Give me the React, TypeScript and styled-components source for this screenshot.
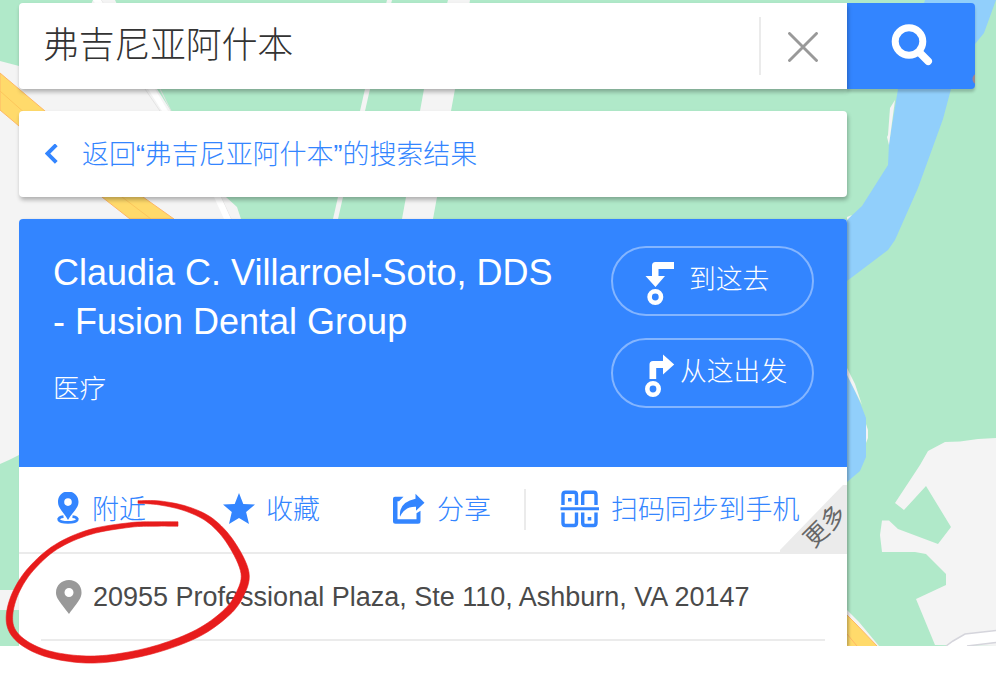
import React from 'react';
import styled, { createGlobalStyle } from 'styled-components';

const BLUE = '#3385ff';
const SANS = '"Liberation Sans", "Noto Sans CJK SC", sans-serif';

const GlobalStyle = createGlobalStyle`
  * { box-sizing: border-box; }
  body { margin: 0; background: #fff; font-family: ${SANS}; overflow: hidden; }
  button { font: inherit; padding: 0; margin: 0; background: none; border: 0; }
`;

const Page = styled.main`
  position: relative;
  width: 996px;
  height: 676px;
  overflow: hidden;
  background: #fff;
`;

const MapCanvas = styled.svg`
  position: absolute;
  inset: 0 auto auto 0;
  display: block;
`;

const Sidebar = styled.div`
  position: relative;
  width: 977px;
  height: 646px;
  margin-left: 19px;
  padding-top: 3px;
  display: flex;
  flex-direction: column;
  gap: 22px;
  clip-path: inset(0 0 0 -19px);
`;

const SearchRow = styled.form`
  display: flex;
  height: 86px;
  flex: none;
`;

const SearchField = styled.div`
  display: flex;
  align-items: center;
  width: 828px;
  padding-left: 24px;
  background: #fff;
  border-radius: 4px 0 0 4px;
  box-shadow: 1px 3px 4px rgba(0, 0, 0, 0.28);
  z-index: 1;
`;

const Query = styled.span`
  flex: 1;
  font-size: 36px;
  font-weight: 300;
  letter-spacing: -0.3px;
  line-height: 84px;
  color: #333;
`;

const ClearButton = styled.button`
  width: 88px;
  height: 58px;
  border-left: 2px solid #ebebeb;
  display: flex;
  align-items: center;
  justify-content: center;
  padding: 2px 3px 0 0;
`;

const SearchButton = styled.button`
  position: relative;
  width: 128px;
  background: radial-gradient(circle at 131px 76px, #a0848c 5px, transparent 6px) ${BLUE};
  border-radius: 0 4px 4px 0;
  box-shadow: 0 3px 3px rgba(0, 0, 0, 0.2);
  display: flex;
  padding: 19px 0 0 43px;
`;

const BackBar = styled.nav`
  display: flex;
  align-items: center;
  flex: none;
  width: 828px;
  height: 86px;
  padding-left: 26px;
  gap: 24px;
  background: #fff;
  border-radius: 4px;
  box-shadow: 1px 3px 4px rgba(0, 0, 0, 0.28);
`;

const BackText = styled.span`
  margin-top: -4px;
  font-size: 27px;
  font-weight: 300;
  letter-spacing: -0.05px;
  color: ${BLUE};
  white-space: nowrap;
`;

const PlaceCard = styled.section`
  width: 828px;
  height: 427px;
  background: #fff;
  border-radius: 4px 4px 0 0;
  box-shadow: 2px 1px 3px rgba(0, 0, 0, 0.25);
`;

const PlaceHeader = styled.header`
  display: flex;
  justify-content: space-between;
  height: 248px;
  padding: 27px 33px 0 34px;
  color: #fff;
  background: ${BLUE};
  border-radius: 4px 4px 0 0;
`;

const PlaceTitle = styled.h1`
  margin: 2px 0 0;
  width: 520px;
  font-size: 36px;
  font-weight: 400;
  line-height: 49px;
  white-space: nowrap;
`;

const Category = styled.p`
  margin: 23px 0 0;
  font-size: 26.5px;
  font-weight: 300;
  line-height: 40px;
`;

const RouteButtons = styled.div`
  display: flex;
  flex-direction: column;
  gap: 22px;
`;

const RouteButton = styled.button<{ $gap: number }>`
  display: flex;
  align-items: center;
  gap: ${(p) => p.$gap}px;
  width: 203px;
  height: 70px;
  padding-left: 32px;
  border: 2px solid #84b5ff;
  border-radius: 35px;
  color: #fff;
  font-size: 26.8px;
  font-weight: 300;
  line-height: 40px;
  white-space: nowrap;

  svg { overflow: visible; }
  span { margin-top: -2px; }
`;

const ActionBar = styled.div`
  position: relative;
  display: flex;
  align-items: flex-start;
  height: 87px;
  padding: 22px 0 0 36px;
  border-bottom: 2px solid #ebebeb;
`;

const Action = styled.button<{ $width: number; $gap: number }>`
  display: flex;
  align-items: center;
  width: ${(p) => p.$width}px;
  height: 40px;
  gap: ${(p) => p.$gap}px;
  color: ${BLUE};
  font-size: 27px;
  font-weight: 300;
  letter-spacing: -0.1px;
  white-space: nowrap;

  svg { flex: none; }
  span { margin-top: -4px; }
`;

const Divider = styled.i`
  width: 2px;
  height: 41px;
  margin-right: 34px;
  background: #ebebeb;
`;

const MoreCorner = styled.div`
  position: absolute;
  right: 0;
  bottom: -2px;
  width: 67px;
  height: 69px;
  background: #ebebeb;
  clip-path: polygon(0 65px, 63px 0, 100% 0, 100% 100%, 0 100%);

  span {
    position: absolute;
    left: 20px;
    top: 26px;
    width: 50px;
    height: 30px;
    line-height: 30px;
    font-size: 24px;
    font-weight: 400;
    color: #666;
    text-align: center;
    transform: rotate(-45deg);
  }
`;

const AddressRow = styled.address`
  display: flex;
  align-items: center;
  gap: 11px;
  height: 87px;
  margin: 0 22px;
  padding-left: 15px;
  border-bottom: 2px solid #ebebeb;
  color: #4a4a4a;
  font-size: 27px;
  font-style: normal;
  white-space: nowrap;

  span { margin-top: 2px; }
`;

const Ink = styled.svg`
  position: absolute;
  left: 0;
  top: 0;
  pointer-events: none;
`;

type InkPoint = [x: number, y: number, width: number];

const INK: InkPoint[] = [
  [138, 502, 2.6], [160, 503, 4], [187, 509, 5], [211, 521, 6], [231, 543, 7], [245, 573, 8],
  [239, 596, 8], [225, 614, 7.5], [198, 633, 7.5], [160, 648, 7], [120, 657, 7], [86, 659.5, 7],
  [52, 655, 6.5], [28, 645.5, 6.5], [13, 632, 6.4], [9.5, 615, 6.4], [16, 592, 6], [31, 569, 5.5],
  [56, 547, 5], [90, 532, 5], [130, 525, 4.6], [155, 524, 4.4], [178, 524, 4.4],
];

/* Builds the outline of a pen stroke whose width changes along its course. */
function strokeOutline(points: InkPoint[]): string {
  const samples: InkPoint[] = [];
  for (let i = 0; i < points.length - 1; i++) {
    const a = points[Math.max(0, i - 1)];
    const b = points[i];
    const c = points[i + 1];
    const d = points[Math.min(points.length - 1, i + 2)];
    for (let s = 0; s < 8; s++) {
      const t = s / 8;
      samples.push([0, 1, 2].map((k) =>
        0.5 * (2 * b[k] + (c[k] - a[k]) * t + (2 * a[k] - 5 * b[k] + 4 * c[k] - d[k]) * t * t +
          (3 * b[k] - a[k] - 3 * c[k] + d[k]) * t * t * t)) as InkPoint);
    }
  }
  samples.push(points[points.length - 1]);
  const side = (dir: number) => samples.map(([x, y, w], i) => {
    const p = samples[Math.max(0, i - 1)];
    const n = samples[Math.min(samples.length - 1, i + 1)];
    const dx = n[0] - p[0];
    const dy = n[1] - p[1];
    const len = Math.hypot(dx, dy) || 1;
    return `${(x - (dir * dy * w) / 2 / len).toFixed(2)},${(y + (dir * dx * w) / 2 / len).toFixed(2)}`;
  });
  return [...side(1), ...side(-1).reverse()].join(' ');
}

const MapBackground = () => (
  <MapCanvas width="996" height="646" viewBox="0 0 996 646">
    <rect width="996" height="646" fill="#b0e9c9" />
    <path d="M0 61 19 66 60 70 93 0H115L157 89 171 111 226 197 237 207 241 219V400L19 455 9 460 0 464Z" fill="#f4f4f4" />
    <path d="M101 0 160 89 171 111 221 197 231 219 M145 89 160 111 217 197 229 219" fill="none" stroke="#e4e4e4" />
    <path d="M93 0H101L155 89 168 111 221 197 231 219H224L214 197 162 111 148 89Z" fill="#fff" />
    <path d="M0 73 45 111 143 197 174 219H130L102 197 19 126 0 110Z" fill="#ffda6b" stroke="#ffb766" />
    <path d="M0 91 27 115 122 197 151 219" fill="none" stroke="#fcc65c" />
    <path d="M387 0H392L370 89 365 111 343 197 338 219H333L338 197 360 111 365 89Z M448 0H470L455 89 451 111 437 197 433 219H402L406 197 420 111 424 89Z" fill="#f4f4f4" />
    <path d="M0 590H19V610H0Z" fill="#f4f4f4" />
    <path d="M925 0H996L984 33 975 44 951 89 943 119 918 188 895 240 888 250 847 281V220L862 206 888 165 889 143 898 89Z" fill="#91cffb" />
    <path d="M895 100 890 108 888 135 887 137 889 145 891 130Z M847 220V217L852 215Z" fill="#f4f4f4" />
    <path d="M847 372 861 405 866 418V457L860 471 847 482Z" fill="#91cffb" />
    <path d="M847 368 855 384 862 405 847 375Z M866 424 868 430V438L866 443Z" fill="#f4f4f4" />
    <path d="M996 438 978 439 960 441.5 945 442 928 451 920 465 895 503 904 510 926 486 951 527 938 544 898 529 889 520.5H882L880 535 882 552H915L926 554 946 574V585L916 599 935 645 996 646Z" fill="#f4f4f4" />
    <path d="M946 646 965 634 996 630V642L967 646Z" fill="#fff" />
    <path d="M946 646 953 641 965 634 996 630.5 M967 646 996 642.5" fill="none" stroke="#d5d5dc" strokeWidth="1.5" />
    <path d="M847 610 859 622 879 646H847Z" fill="#f4f4f4" />
    <path d="M847 615 856 624 877 646H847Z" fill="#ffda6b" />
    <path d="M847 615 856 624 877 646 M847 634 857 646" fill="none" stroke="#ffb766" />
  </MapCanvas>
);

const CloseIcon = () => (
  <svg width="30" height="30" viewBox="0 0 30 30">
    <path d="M1.5 1.5 28.5 28.5M28.5 1.5 1.5 28.5" stroke="#999" strokeWidth="2.9" strokeLinecap="round" />
  </svg>
);

const SearchIcon = () => (
  <svg width="44" height="44" viewBox="0 0 44 44" fill="none" stroke="#fff">
    <circle cx="19" cy="19.5" r="13.8" strokeWidth="7" />
    <path d="M30 31 38.2 39.2" strokeWidth="7.6" strokeLinecap="round" />
  </svg>
);

const BackIcon = () => (
  <svg width="13" height="20" viewBox="0 0 13 20">
    <path d="M11.3 .8 2.5 9.5 11.3 18.4" fill="none" stroke={BLUE} strokeWidth="3.9" />
  </svg>
);

const ToHereIcon = () => (
  <svg width="30" height="46" viewBox="0 -2 30 46">
    <path d="M7 16V5.5Q7 2 10.5 2H29V9H13.5V16H20L10.5 27 .5 16Z" fill="#fff" />
    <circle cx="10.3" cy="37" r="5.7" fill="none" stroke="#fff" strokeWidth="4.6" />
  </svg>
);

const FromHereIcon = () => (
  <svg width="30" height="46" viewBox="0 -2 30 46">
    <path d="M4.500 27V12.500Q4.500 9 8 9H18V2.500L29.200 12.500 18 22.500V16H11.200V27Z" fill="#fff" />
    <circle cx="8" cy="37" r="5.7" fill="none" stroke="#fff" strokeWidth="4.6" />
  </svg>
);

const NearbyIcon = () => (
  <svg width="26" height="34" viewBox="0 1.5 26 34">
    <path fill={BLUE} fillRule="evenodd" d="M13 1C7 1 3 5.5 3 11.5 3 18 9 22 13 29.5 17 22 23.5 18 23.5 11.5 23.5 5.5 19 1 13 1ZM13 7.8A3.8 3.8 0 1 1 13 15.4 3.8 3.8 0 0 1 13 7.8Z" />
    <path d="M8.5 26.2C1 27 2 31.8 13 31.8S25 27 17.5 26.2" fill="none" stroke={BLUE} strokeWidth="2.8" />
  </svg>
);

const StarIcon = () => (
  <svg width="33" height="33" viewBox="-.5 1 33 33">
    <path d="M16.5 1 20.8 12 32.5 12.600 23.600 20 26.500 32 16.500 26 6.500 32 9.300 20 .5 12.600 12.200 12Z" fill={BLUE} />
  </svg>
);

const ShareIcon = () => (
  <svg width="33" height="33" viewBox="0 .8 33 33">
    <path d="M11.5 4.5H3Q1 4.5 1 6.5V29Q1 31.5 3.5 31.5H26Q28.5 31.5 28.5 29V18.5L24.5 21V27H5.5V9H7Z" fill={BLUE} />
    <path d="M23.5 1.5 32.5 10.5 24 18.5V14.5Q13 14 8 24.5 6.5 10 23.5 6.5Z" fill={BLUE} />
  </svg>
);

const ScanIcon = () => (
  <svg width="40" height="40" viewBox="0 0 40 40">
    <g fill="none" stroke={BLUE}>
      <path strokeWidth="3.4" d="M3 16V6Q3 3.300 5.500 3.300H14Q16.500 3.300 16.500 6V16M22.700 16V6Q22.700 3.300 25.200 3.300H33.500Q36 3.300 36 6V16M3 23.500V34Q3 36.500 5.500 36.500H14Q16.500 36.500 16.500 34V23.500M22.700 23.500V34Q22.700 36.500 25.200 36.500H33.500Q36 36.500 36 34V23.500" />
      <path strokeWidth="3" d="M.5 19.700H39" />
    </g>
    <path d="M8 9h3.600v3.600H8ZM27.700 28h3.600v3.600h-3.600Z" fill={BLUE} />
  </svg>
);

const PinIcon = () => (
  <svg width="26" height="34" viewBox="0 0 26 34">
    <path fill="#999" fillRule="evenodd" d="M13 0C6 0 0 5 0 12.5 0 18 3 20.5 13 34 23 20.5 25.5 18 25.5 12.5 25.5 5 20 0 13 0ZM13 8A4.5 4.5 0 1 1 13 17 4.5 4.5 0 0 1 13 8Z" />
  </svg>
);

export default function App() {
  return (
    <>
      <GlobalStyle />
      <Page>
        <MapBackground />
        <Sidebar>
          <SearchRow>
            <SearchField>
              <Query>弗吉尼亚阿什本</Query>
              <ClearButton type="button" aria-label="清除"><CloseIcon /></ClearButton>
            </SearchField>
            <SearchButton type="button" aria-label="搜索"><SearchIcon /></SearchButton>
          </SearchRow>

          <BackBar>
            <BackIcon />
            <BackText>返回“弗吉尼亚阿什本”的搜索结果</BackText>
          </BackBar>

          <PlaceCard>
            <PlaceHeader>
              <div>
                <PlaceTitle>Claudia C. Villarroel-Soto, DDS<br />- Fusion Dental Group</PlaceTitle>
                <Category>医疗</Category>
              </div>
              <RouteButtons>
                <RouteButton type="button" $gap={14}><ToHereIcon /><span>到这去</span></RouteButton>
                <RouteButton type="button" $gap={5}><FromHereIcon /><span>从这出发</span></RouteButton>
              </RouteButtons>
            </PlaceHeader>

            <ActionBar>
              <Action type="button" $width={167} $gap={11}><NearbyIcon /><span>附近</span></Action>
              <Action type="button" $width={170} $gap={11}><StarIcon /><span>收藏</span></Action>
              <Action type="button" $width={132} $gap={12}><ShareIcon /><span>分享</span></Action>
              <Divider />
              <Action type="button" $width={250} $gap={11}><ScanIcon /><span>扫码同步到手机</span></Action>
              <MoreCorner><span>更多</span></MoreCorner>
            </ActionBar>

            <AddressRow>
              <PinIcon />
              <span>20955 Professional Plaza, Ste 110, Ashburn, VA 20147</span>
            </AddressRow>
          </PlaceCard>
        </Sidebar>
        <Ink width="260" height="676" viewBox="0 0 260 676">
          <polygon points={strokeOutline(INK)} fill="#e71c1c" stroke="#e71c1c" strokeWidth="0.6" strokeLinejoin="round" />
        </Ink>
      </Page>
    </>
  );
}
